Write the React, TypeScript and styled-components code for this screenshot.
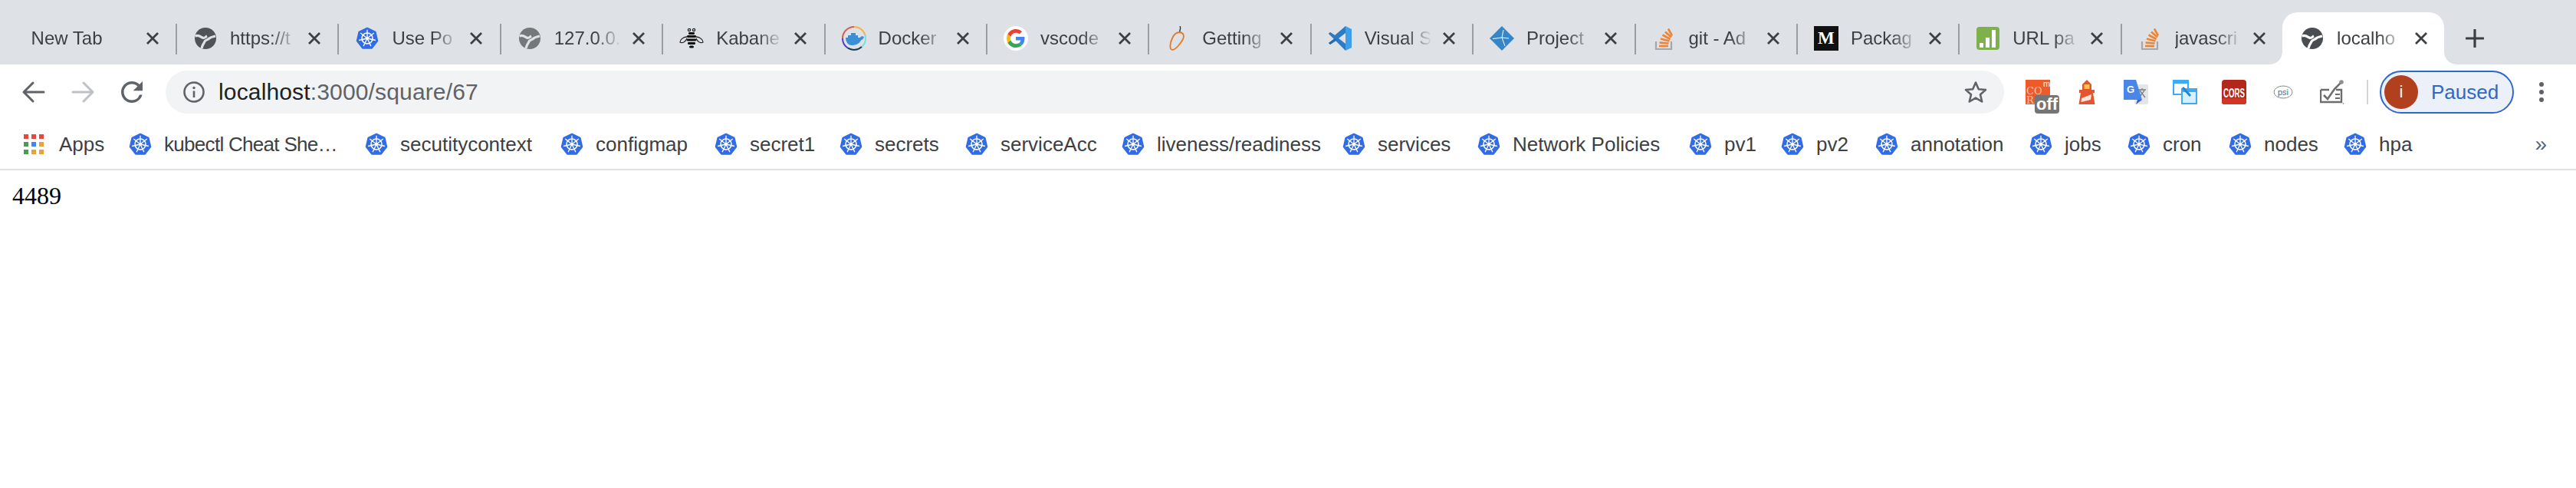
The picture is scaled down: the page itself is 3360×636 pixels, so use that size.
import React from "react";
import styled, { createGlobalStyle } from "styled-components";

const GlobalStyle = createGlobalStyle`
  html, body {
    margin: 0;
    padding: 0;
    background: #ffffff;
  }
`;

const Browser = styled.div`
  width: 3360px;
  font-family: "Liberation Sans", Arial, sans-serif;
  color: #3c4043;

  svg {
    flex: none;
  }
`;

const TabStrip = styled.div`
  display: flex;
  align-items: stretch;
  height: 68px;
  padding: 16px 0 0 17.6px;
  background: #dee1e6;
`;

const Tab = styled.div<{ $active?: boolean; $divider?: boolean }>`
  position: relative;
  display: flex;
  flex: none;
  align-items: center;
  gap: 14px;
  box-sizing: border-box;
  width: 211.4px;
  padding: 0 22.4px 0 23px;
  background: ${(p) => (p.$active ? "#ffffff" : "transparent")};
  border-radius: ${(p) => (p.$active ? "20px 20px 0 0" : "0")};

  &::before {
    content: "";
    display: ${(p) => (p.$divider ? "block" : "none")};
    position: absolute;
    left: 0;
    top: 15px;
    width: 2px;
    height: 40px;
    background: #9a9da1;
  }
`;

const TabCurve = styled.span<{ $side: "left" | "right" }>`
  position: absolute;
  bottom: 0;
  ${(p) => p.$side}: -16px;
  width: 16px;
  height: 16px;
  background: radial-gradient(
    circle at ${(p) => (p.$side === "left" ? "0 0" : "100% 0")},
    transparent 15.5px,
    #ffffff 16px
  );
`;

const Favicon = styled.span`
  display: flex;
  flex: none;
  width: 32px;
  height: 32px;
  margin-right: 2px;
  align-items: center;
  justify-content: center;
`;

const TabTitle = styled.span`
  flex: 1;
  min-width: 0;
  overflow: hidden;
  white-space: nowrap;
  font-size: 24px;
  line-height: 32px;
  color: #3c4043;
  -webkit-mask-image: linear-gradient(to left, transparent 0, #000 34px);
  mask-image: linear-gradient(to left, transparent 0, #000 34px);
`;

const NewTabButton = styled.span`
  display: flex;
  flex: none;
  align-items: center;
  margin-left: 28px;
`;

const Toolbar = styled.div`
  display: flex;
  align-items: center;
  height: 72px;
  padding-left: 28px;
  background: #ffffff;
`;

const NavGroup = styled.div`
  display: flex;
  flex: none;
  gap: 32px;
  margin-right: 28px;
`;

const NavButton = styled.span`
  display: flex;
  width: 32px;
  height: 32px;
  align-items: center;
  justify-content: center;
`;

const Omnibox = styled.div`
  display: flex;
  flex: none;
  align-items: center;
  box-sizing: border-box;
  width: 2398px;
  height: 56px;
  padding: 0 22px 0 23px;
  border-radius: 28px;
  background: #f1f3f4;
`;

const UrlText = styled.div`
  flex: 1;
  margin-left: 18px;
  font-size: 30px;
  letter-spacing: 0.15px;
  color: #5f6368;

  b {
    font-weight: 400;
    color: #202124;
  }
`;

const Extensions = styled.div`
  display: flex;
  flex: none;
  align-items: center;
  gap: 32px;
  margin-left: 28px;
`;

const Extension = styled.span`
  position: relative;
  display: flex;
  width: 32px;
  height: 32px;
  align-items: center;
  justify-content: center;
`;

const OffBadge = styled.span`
  position: absolute;
  left: 12px;
  top: 20px;
  width: 32px;
  height: 24px;
  border-radius: 4px;
  background: #757575;
  color: #ffffff;
  font-size: 22px;
  font-weight: 700;
  line-height: 24px;
  text-align: center;
`;

const ToolbarDivider = styled.span`
  flex: none;
  width: 2px;
  height: 32px;
  margin: 0 15px 0 29px;
  background: #d3d5d8;
`;

const ProfilePill = styled.div`
  display: flex;
  flex: none;
  align-items: center;
  gap: 17px;
  box-sizing: border-box;
  width: 175px;
  height: 56px;
  padding: 0 4px;
  border: 2px solid #2f68c8;
  border-radius: 28px;
  background: #ebf0f9;
  color: #2f68c8;
  font-size: 26px;
`;

const Avatar = styled.span`
  display: flex;
  flex: none;
  width: 44px;
  height: 44px;
  align-items: center;
  justify-content: center;
  border-radius: 50%;
  background: #b0401e;
  color: #ffffff;
  font-size: 22px;
`;

const MenuDots = styled.div`
  display: flex;
  flex: none;
  flex-direction: column;
  gap: 4px;
  margin-left: 33px;

  span {
    width: 6px;
    height: 6px;
    border-radius: 50%;
    background: #5f6368;
  }
`;

const BookmarkBar = styled.div`
  display: flex;
  align-items: center;
  height: 64px;
  padding-left: 28px;
  border-bottom: 2px solid #dfdfe4;
  background: #ffffff;
`;

const Bookmark = styled.div<{ $width: number; $spacing?: number }>`
  display: flex;
  flex: none;
  align-items: center;
  gap: 15.5px;
  width: ${(p) => p.$width}px;
  font-size: 26px;
  letter-spacing: ${(p) => p.$spacing ?? 0}px;
  white-space: nowrap;
  color: #3c4043;
`;

const AppsLabel = styled.span`
  margin-left: 1.5px;
`;

const MoreBookmarks = styled.div`
  margin-left: auto;
  padding-right: 38px;
  font-size: 28px;
  color: #5f6368;
`;

const PageBody = styled.div`
  height: 414px;
  padding: 15px 16px;
  box-sizing: border-box;
  font-family: "Liberation Serif", "Times New Roman", serif;
  font-size: 32px;
  color: #000000;
`;

const Kube = () => (
  <svg width="32" height="32" viewBox="0 0 32 32">
    <polygon
      points="16,3 26.4,8 29,19.3 21.8,28.4 10.2,28.4 3,19.3 5.6,8"
      fill="#326ce5"
      stroke="#326ce5"
      strokeWidth="2.5"
      strokeLinejoin="round"
    />
    <g stroke="#fff" fill="none">
      <circle cx="16" cy="16" r="7" strokeWidth="1.6" />
      <circle cx="16" cy="16" r="1.7" fill="#fff" strokeWidth="0.5" />
      <path
        strokeWidth="1.3"
        d="M16 4.8V16M16 16L24.8 9 M16 16L7.2 9 M16 16L26.9 18.5 M16 16L5.1 18.5 M16 16L20.9 26.1 M16 16L11.1 26.1"
      />
    </g>
  </svg>
);

const Globe = ({ color = "#505357", land = "#dee1e6" }: { color?: string; land?: string }) => (
  <svg width="28" height="28" viewBox="0 0 28 28">
    <circle cx="14" cy="14" r="14" fill={color} />
    <path
      d="M0.5 11 C5 9 8 12 10 13 C13 14.5 14 12 16 11 M27 11 C24 12 21 12 19 14 C17 16 14 16 13 18 C12 21 10 22 9 27"
      stroke={land}
      strokeWidth="3.2"
      fill="none"
    />
  </svg>
);

const Bee = () => (
  <svg width="32" height="32" viewBox="0 0 32 32">
    <g fill="none" stroke="#222" strokeWidth="1.3">
      <circle cx="13" cy="5" r="1.6" />
      <circle cx="19" cy="5" r="1.6" />
      <path d="M10 14C5 14 1 18 1 21C4 23 9 20 10 16M22 14C27 14 31 18 31 21C28 23 23 20 22 16" />
    </g>
    <g fill="#111">
      <rect x="12" y="8" width="8" height="3" rx="1.2" />
      <rect x="10" y="12" width="12" height="3" rx="1.2" />
      <rect x="10" y="16.5" width="12" height="3" rx="1.2" />
      <rect x="11" y="21" width="10" height="3" rx="1.2" />
      <rect x="13" y="25.5" width="6" height="3" rx="1.5" />
    </g>
  </svg>
);

const Docker = () => (
  <svg width="32" height="32" viewBox="0 0 32 32">
    <g fill="none" strokeWidth="2">
      <path d="M16 1A15 15 0 0 1 30.5 12" stroke="#f0b257" />
      <path d="M30.5 12A15 15 0 0 1 26 27" stroke="#79dfe3" />
      <path d="M26 27A15 15 0 0 1 8 28.7" stroke="#173a55" />
      <path d="M8 28.7A15 15 0 0 1 1 16" stroke="#4a3fb5" />
      <path d="M1 16A15 15 0 0 1 16 1" stroke="#d8584f" />
    </g>
    <path
      d="M5 15H24C25 13 27 13 29 14C28 17 26 18 25 18.5C23 23 18 25 13 25C8 25 5 20 5 15Z"
      fill="#3a8fd6"
    />
    <path d="M8 12H21V15H8ZM12 9H18V12H12Z" fill="#3a8fd6" />
  </svg>
);

const GoogleG = () => (
  <svg width="32" height="32" viewBox="0 0 32 32">
    <circle cx="16" cy="16" r="16" fill="#fff" />
    <g transform="translate(4 4) scale(0.5)">
      <path fill="#4285f4" d="M46.98 24.55c0-1.57-.15-3.09-.38-4.55H24v9.02h12.94c-.58 2.96-2.26 5.48-4.78 7.18l7.73 6c4.51-4.18 7.09-10.36 7.09-17.65z" />
      <path fill="#34a853" d="M24 48c6.48 0 11.93-2.13 15.89-5.81l-7.73-6c-2.15 1.45-4.92 2.3-8.16 2.3-6.26 0-11.57-4.22-13.47-9.91l-7.98 6.19C6.51 42.62 14.62 48 24 48z" />
      <path fill="#fbbc05" d="M10.53 28.59c-.48-1.45-.76-2.99-.76-4.59s.27-3.14.76-4.59l-7.98-6.19C.92 16.46 0 20.12 0 24c0 3.88.92 7.54 2.56 10.78l7.97-6.19z" />
      <path fill="#ea4335" d="M24 9.5c3.54 0 6.71 1.22 9.21 3.6l6.85-6.85C35.9 2.38 30.47 0 24 0 14.62 0 6.51 5.38 2.56 13.22l7.98 6.19C12.43 13.72 17.74 9.5 24 9.5z" />
    </g>
  </svg>
);

const Chili = () => (
  <svg width="32" height="32" viewBox="0 0 32 32">
    <path d="M19 8C18 5 21 4 19 0" stroke="#333" strokeWidth="1.4" fill="none" />
    <path
      d="M19 8C24 9 25 13 23 17C20 23 13 31 9 31C5 30 6 22 9 16C11 11 14 8 19 8Z"
      fill="none"
      stroke="#e07b26"
      strokeWidth="1.8"
    />
  </svg>
);

const VsCode = () => (
  <svg width="32" height="32" viewBox="0 0 32 32">
    <path d="M23 0L31 4V28L23 32Z" fill="#3f9fea" />
    <path d="M23 0V9L9 20L3 24L1 22L9 16L1 10L3 8L9 12Z" fill="#2b7cc4" />
    <path d="M23 32V23L9 12L3 8L1 10L23 32Z" fill="#2b7cc4" />
    <path d="M9 16L1 22L3 24L12 18Z" fill="#1f6eb4" />
  </svg>
);

const Jira = () => (
  <svg width="32" height="32" viewBox="0 0 32 32">
    <path d="M16 0L32 16L16 32L0 16Z" fill="#3685c9" />
    <path d="M18 5L16 15L4 16.5M16 15L20 26M16 15L25 16" stroke="#fff" strokeWidth="1" fill="none" />
  </svg>
);

const StackOverflow = () => (
  <svg width="32" height="32" viewBox="0 0 32 32">
    <path d="M5 20V30H25V20" fill="none" stroke="#a6a7a9" strokeWidth="2.2" />
    <g fill="none" stroke="#ec8434" strokeWidth="2.6">
      <path d="M9 26H21" />
      <path d="M9.5 21.5L21.5 22.5" />
      <path d="M11 16.5L22.5 19.5" />
      <path d="M13.5 11.5L23.5 17" />
      <path d="M17 7.5L25 14.5" />
      <path d="M21 3.5L26 12.5" />
    </g>
  </svg>
);

const MediumText = styled.span`
  display: flex;
  width: 32px;
  height: 32px;
  align-items: center;
  justify-content: center;
  background: #111111;
  color: #ffffff;
  font-family: "Liberation Serif", serif;
  font-size: 23px;
  font-weight: 700;
`;

const UrlParser = () => (
  <svg width="30" height="30" viewBox="0 0 30 30">
    <rect width="30" height="30" rx="4" fill="#7cb14b" />
    <path d="M4 21H9V27H4ZM12 14H17V27H12ZM20 4H25V27H20Z" fill="#fff" />
  </svg>
);

const icons: Record<string, React.ReactNode> = {
  globe: <Globe />,
  globeActive: <Globe color="#494c50" land="#ffffff" />,
  globeLight: <Globe color="#75787b" />,
  kube: <Kube />,
  bee: <Bee />,
  docker: <Docker />,
  google: <GoogleG />,
  chili: <Chili />,
  vscode: <VsCode />,
  jira: <Jira />,
  so: <StackOverflow />,
  medium: <MediumText>M</MediumText>,
  url: <UrlParser />,
};

const tabs = [
  { title: "New Tab" },
  { title: "https://t", icon: "globe" },
  { title: "Use Po", icon: "kube" },
  { title: "127.0.0.", icon: "globeLight" },
  { title: "Kabane", icon: "bee" },
  { title: "Docker", icon: "docker" },
  { title: "vscode", icon: "google" },
  { title: "Getting", icon: "chili" },
  { title: "Visual S", icon: "vscode" },
  { title: "Project", icon: "jira" },
  { title: "git - Ad", icon: "so" },
  { title: "Packag", icon: "medium" },
  { title: "URL pa", icon: "url" },
  { title: "javascri", icon: "so" },
  { title: "localho", icon: "globeActive" },
];

const bookmarks = [
  { label: "kubectl Cheat She…", width: 308, spacing: -0.7 },
  { label: "secutitycontext", width: 255 },
  { label: "configmap", width: 201 },
  { label: "secret1", width: 163 },
  { label: "secrets", width: 164 },
  { label: "serviceAcc", width: 204 },
  { label: "liveness/readiness", width: 288 },
  { label: "services", width: 176 },
  { label: "Network Policies", width: 276 },
  { label: "pv1", width: 120 },
  { label: "pv2", width: 123 },
  { label: "annotation", width: 201 },
  { label: "jobs", width: 128 },
  { label: "cron", width: 132 },
  { label: "nodes", width: 150 },
  { label: "hpa", width: 120 },
];

const CloseIcon = () => (
  <svg width="16" height="16" viewBox="0 0 16 16">
    <path d="M1 1L15 15M15 1L1 15" stroke="#3c4043" strokeWidth="2.8" />
  </svg>
);

const PlusIcon = () => (
  <svg width="24" height="24" viewBox="0 0 24 24">
    <path d="M12 1V23M1 12H23" stroke="#3c4043" strokeWidth="3.2" strokeLinecap="round" />
  </svg>
);

const BackIcon = ({ color, flip }: { color: string; flip?: boolean }) => (
  <svg width="32" height="32" viewBox="0 0 32 32">
    <path
      d={flip ? "M3 16H29M17 4L29 16L17 28" : "M29 16H3M15 4L3 16L15 28"}
      fill="none"
      stroke={color}
      strokeWidth="3"
      strokeLinecap="round"
      strokeLinejoin="round"
    />
  </svg>
);

const ReloadIcon = () => (
  <svg width="28" height="28" viewBox="4 4 16 16">
    <path
      fill="#5f6368"
      d="M17.65 6.35A7.958 7.958 0 0 0 12 4c-4.42 0-7.99 3.58-7.99 8s3.57 8 7.99 8c3.73 0 6.84-2.55 7.73-6h-2.08A5.99 5.99 0 0 1 12 18c-3.31 0-6-2.69-6-6s2.69-6 6-6c1.66 0 3.14.69 4.22 1.78L13 11h7V4l-2.35 2.35z"
    />
  </svg>
);

const InfoIcon = () => (
  <svg width="28" height="28" viewBox="0 0 28 28">
    <circle cx="14" cy="14" r="12.5" fill="none" stroke="#5f6368" strokeWidth="2.6" />
    <path d="M14 12.5V21" stroke="#5f6368" strokeWidth="2.6" />
    <circle cx="14" cy="8.5" r="1.7" fill="#5f6368" />
  </svg>
);

const StarIcon = () => (
  <svg width="30" height="30" viewBox="0 0 30 30">
    <path
      d="M15 2.5L18.8 11.2L28 12L21 18.2L23.2 27.5L15 22.6L6.8 27.5L9 18.2L2 12L11.2 11.2Z"
      fill="none"
      stroke="#5f6368"
      strokeWidth="2.6"
      strokeLinejoin="round"
    />
  </svg>
);

const AppsIcon = () => (
  <svg width="32" height="32" viewBox="0 0 32 32">
    <g fill="#e5483b">
      <rect x="3" y="3" width="6" height="6" />
      <rect x="13" y="3" width="6" height="6" />
      <rect x="23" y="3" width="6" height="6" />
    </g>
    <rect x="3" y="13" width="6" height="6" fill="#4c9a58" />
    <rect x="13" y="13" width="6" height="6" fill="#4285f4" />
    <rect x="23" y="13" width="6" height="6" fill="#e5a33a" />
    <rect x="3" y="23" width="6" height="6" fill="#4c9a58" />
    <rect x="13" y="23" width="6" height="6" fill="#e5a33a" />
    <rect x="23" y="23" width="6" height="6" fill="#e5a33a" />
  </svg>
);

const CorsM = () => (
  <svg width="32" height="32" viewBox="0 0 32 32">
    <rect width="32" height="32" fill="#ef5a2b" />
    <text x="1" y="19" fontFamily="'DejaVu Serif', serif" fontSize="13" fill="#ffc4ae">CO</text>
    <text x="1" y="31" fontFamily="'DejaVu Serif', serif" fontSize="13" fill="#ffc4ae">R</text>
    <text x="23" y="9" fontFamily="'Liberation Sans', sans-serif" fontSize="11" fill="#fff">m</text>
  </svg>
);

const Lighthouse = () => (
  <svg width="32" height="32" viewBox="0 0 32 32">
    <path d="M16 0L22 6V14H10V6Z" fill="#e2552e" />
    <rect x="12.5" y="6" width="7" height="6" fill="#f7c54c" />
    <path d="M6 13H26V17H24L26.5 32H5.5L8 17H6Z" fill="#e2552e" />
    <path d="M9 24L22 19L21 26L8.5 29Z" fill="#fbe5dc" />
  </svg>
);

const Translate = () => (
  <svg width="32" height="32" viewBox="0 0 32 32">
    <rect x="14" y="6" width="18" height="26" rx="2" fill="#e3e5e6" />
    <path d="M0 0H16L24 26H0Z" fill="#4a86e8" />
    <path d="M18 26L16 32L24 26Z" fill="#3b5ec2" />
    <text x="4" y="17" fontFamily="'Liberation Sans', sans-serif" fontSize="13" fontWeight="700" fill="#fff">G</text>
    <path d="M19 13H29M24 11V13M21 22L27 14M21 14L28 23" stroke="#7a7d80" strokeWidth="1.3" fill="none" />
  </svg>
);

const Windows = () => (
  <svg width="32" height="32" viewBox="0 0 32 32">
    <g fill="#fff" stroke="#40a9f3" strokeWidth="2">
      <rect x="1" y="1" width="19" height="18" />
      <rect x="12" y="12" width="19" height="19" fill="#d8effe" />
    </g>
    <rect x="1" y="1" width="19" height="4" fill="#40a9f3" />
    <rect x="12" y="12" width="19" height="4" fill="#40a9f3" />
    <path d="M13 10L23 21" stroke="#1c86d8" strokeWidth="3" />
  </svg>
);

const CorsBadge = () => (
  <svg width="32" height="32" viewBox="0 0 32 32">
    <rect width="32" height="32" rx="4" fill="#b3261c" />
    <rect y="24" width="32" height="8" rx="3" fill="#d33524" />
    <text
      x="16"
      y="23"
      textAnchor="middle"
      fontFamily="'Liberation Sans', sans-serif"
      fontSize="17"
      fontWeight="700"
      fill="#fff"
      textLength="28"
      lengthAdjust="spacingAndGlyphs"
    >
      CORS
    </text>
  </svg>
);

const Psi = () => (
  <svg width="26" height="18" viewBox="0 0 26 18">
    <ellipse cx="13" cy="9" rx="12" ry="8" fill="none" stroke="#8a8a8a" />
    <text
      x="13"
      y="13"
      textAnchor="middle"
      fontFamily="'Liberation Sans', sans-serif"
      fontSize="11"
      fill="#666"
    >
      psi
    </text>
  </svg>
);

const Checklist = () => (
  <svg width="32" height="32" viewBox="0 0 32 32">
    <path d="M1 13H12M21 13H28V29H1V13" fill="none" stroke="#6d6d6d" strokeWidth="2.4" />
    <path d="M5 20L10 25L19 12L28 3" fill="none" stroke="#6d6d6d" strokeWidth="2.6" />
    <circle cx="28" cy="3" r="2.8" fill="#8f8f8f" />
    <path d="M20 19H26M20 24H26" stroke="#6d6d6d" strokeWidth="2" />
    <circle cx="30.5" cy="31" r="0.8" fill="#6d6d6d" />
  </svg>
);

const App = () => {
  return (
    <Browser>
      <GlobalStyle />
      <TabStrip>
        {tabs.map((tab, index) => {
          const active = index === tabs.length - 1;
          return (
            <Tab key={tab.title} $active={active} $divider={index > 0 && !active}>
              {active && <TabCurve $side="left" />}
              {active && <TabCurve $side="right" />}
              {tab.icon && <Favicon>{icons[tab.icon]}</Favicon>}
              <TabTitle>{tab.title}</TabTitle>
              <CloseIcon />
            </Tab>
          );
        })}
        <NewTabButton>
          <PlusIcon />
        </NewTabButton>
      </TabStrip>

      <Toolbar>
        <NavGroup>
          <NavButton>
            <BackIcon color="#5f6368" />
          </NavButton>
          <NavButton>
            <BackIcon color="#bfc1c4" flip />
          </NavButton>
          <NavButton>
            <ReloadIcon />
          </NavButton>
        </NavGroup>
        <Omnibox>
          <InfoIcon />
          <UrlText>
            <b>localhost</b>:3000/square/67
          </UrlText>
          <StarIcon />
        </Omnibox>
        <Extensions>
          <Extension>
            <CorsM />
            <OffBadge>off</OffBadge>
          </Extension>
          <Extension>
            <Lighthouse />
          </Extension>
          <Extension>
            <Translate />
          </Extension>
          <Extension>
            <Windows />
          </Extension>
          <Extension>
            <CorsBadge />
          </Extension>
          <Extension>
            <Psi />
          </Extension>
          <Extension>
            <Checklist />
          </Extension>
        </Extensions>
        <ToolbarDivider />
        <ProfilePill>
          <Avatar>i</Avatar>
          Paused
        </ProfilePill>
        <MenuDots>
          <span />
          <span />
          <span />
        </MenuDots>
      </Toolbar>

      <BookmarkBar>
        <Bookmark $width={138.5}>
          <AppsIcon />
          <AppsLabel>Apps</AppsLabel>
        </Bookmark>
        {bookmarks.map((bookmark) => (
          <Bookmark key={bookmark.label} $width={bookmark.width} $spacing={bookmark.spacing}>
            <Kube />
            {bookmark.label}
          </Bookmark>
        ))}
        <MoreBookmarks>»</MoreBookmarks>
      </BookmarkBar>

      <PageBody>4489</PageBody>
    </Browser>
  );
};

export default App;
